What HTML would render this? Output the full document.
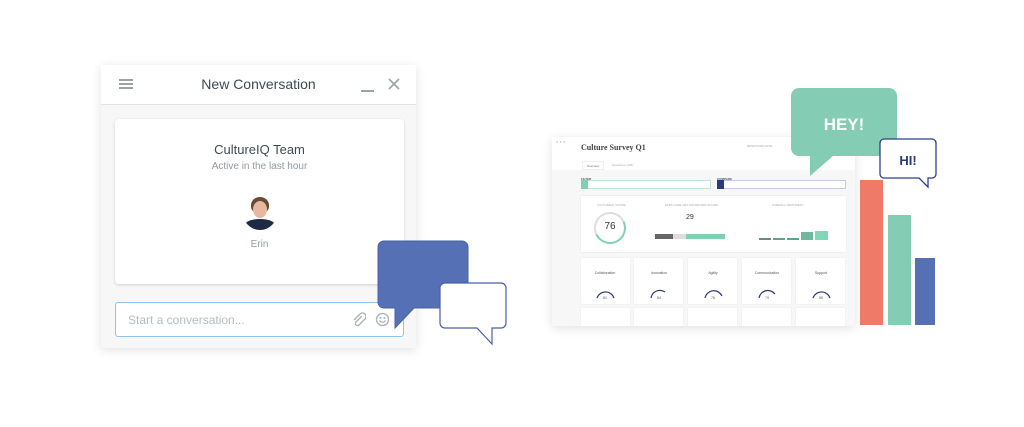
<!DOCTYPE html>
<html><head><meta charset="utf-8"><style>
*{margin:0;padding:0;box-sizing:border-box}
body{width:1024px;height:427px;background:#fff;position:relative;overflow:hidden;font-family:"Liberation Sans",sans-serif}
.a{position:absolute}
.chat{left:101px;top:65px;width:315px;height:283px;background:#f7f7f7;box-shadow:0 2px 10px rgba(0,0,0,.12)}
.hdr{left:0;top:0;width:315px;height:40px;background:#fff;border-bottom:1px solid #e3e3e3}
.card{left:14px;top:54px;width:289px;height:165px;background:#fff;border-radius:4px;box-shadow:0 1px 3px rgba(0,0,0,.15)}
.inp{left:14px;top:237px;width:289px;height:35px;background:#fff;border:1px solid #8cc3f0;border-radius:3px}
.dash{left:552px;top:137px;width:303px;height:189px;background:#f7f7f7;box-shadow:0 2px 10px rgba(0,0,0,.12);overflow:hidden}
.t{font-size:3px;color:#aaa}
.qc{background:#fff;width:49px;height:46px;top:121px;box-shadow:0 0 1px rgba(0,0,0,.1)}
</style></head><body>
<div class="a chat">
 <div class="a hdr">
  <div class="a" style="left:18px;top:14px;width:14px;height:2px;background:#9aa3a9;box-shadow:0 4px 0 #9aa3a9,0 8px 0 #9aa3a9"></div>
  <div class="a" style="left:0;width:315px;top:11px;text-align:center;font-size:14px;color:#3d4a52">New Conversation</div>
  <div class="a" style="left:260px;top:25px;width:13px;height:2px;background:#9aa3a9"></div>
  <svg class="a" style="left:287px;top:13px" width="12" height="12"><path d="M1 1L11 11M11 1L1 11" stroke="#9aa3a9" stroke-width="1.6"/></svg>
 </div>
 <div class="a card">
  <div class="a" style="width:289px;top:23px;text-align:center;font-size:13px;color:#3d4a52">CultureIQ Team</div>
  <div class="a" style="width:289px;top:42px;text-align:center;font-size:10px;color:#8e9ba4">Active in the last hour</div>
  <div class="a" style="left:128px;top:77px;width:34px;height:34px;border-radius:50%;overflow:hidden;background:#fff">
   <div class="a" style="left:8px;top:1px;width:18px;height:16px;border-radius:50% 50% 40% 40%;background:#6b4a35"></div>
   <div class="a" style="left:10px;top:5px;width:14px;height:17px;border-radius:50%;background:#e7b8a0"></div>
   <div class="a" style="left:1px;top:23px;width:32px;height:14px;border-radius:50% 50% 0 0;background:#1f2a44"></div>
  </div>
  <div class="a" style="width:289px;top:120px;text-align:center;font-size:10px;color:#8e9ba4">Erin</div>
 </div>
 <div class="a inp">
  <div class="a" style="left:12px;top:10px;font-size:12px;color:#b4bcc2">Start a conversation...</div>
  <svg class="a" style="left:236px;top:9px" width="14" height="16"><path d="M10 4L4 10a2 2 0 0 0 3 3l6-6a3.5 3.5 0 0 0-5-5L2 8" fill="none" stroke="#a8b0b6" stroke-width="1.3"/></svg>
  <svg class="a" style="left:259px;top:9px" width="15" height="15"><circle cx="7.5" cy="7.5" r="6" fill="none" stroke="#a8b0b6" stroke-width="1.3"/><circle cx="5.5" cy="6" r="1" fill="#a8b0b6"/><circle cx="9.5" cy="6" r="1" fill="#a8b0b6"/><path d="M4.5 8.5q3 3.5 6 0" fill="none" stroke="#a8b0b6" stroke-width="1.2"/></svg>
 </div>
</div>
<svg class="a" style="left:370px;top:235px" width="145" height="115">
 <path d="M14 6H92a6 6 0 0 1 6 6V67a6 6 0 0 1-6 6H44L25 93V73H14a6 6 0 0 1-6-6V12a6 6 0 0 1 6-6z" fill="#5670b6" stroke="#4a61a6" stroke-width="1"/>
 <path d="M75 48H131a5 5 0 0 1 5 5V88a5 5 0 0 1-5 5H122V109L107 93H75a5 5 0 0 1-5-5V53a5 5 0 0 1 5-5z" fill="#fff" stroke="#4a5ea8" stroke-width="1.2"/>
</svg>

<div class="a dash">
 <div class="a" style="left:0;top:0;width:303px;height:33px;background:#fff"></div>
 <div class="a" style="left:4px;top:2px;font-size:4px;color:#ccc">● ● ●</div>
 <div class="a" style="left:29px;top:6px;font-size:8px;color:#444;font-family:'Liberation Serif',serif;font-weight:bold">Culture Survey Q1</div>
 <div class="a t" style="left:195px;top:7px">RESPONSE RATE</div>
 <div class="a" style="left:30px;top:24px;width:22px;height:9px;background:#fff;border:1px solid #eee;font-size:3px;color:#5670b6;text-align:center;line-height:8px">Overview</div>
 <div class="a t" style="left:60px;top:26px">Questions (125)</div>
 <div class="a" style="left:29px;top:40px;font-size:3px;color:#555;font-weight:bold">FILTER</div>
 <div class="a" style="left:165px;top:40px;font-size:3px;color:#555;font-weight:bold">COMPARE</div>
 <div class="a" style="left:29px;top:43px;width:130px;height:9px;background:#fff;border:1px solid #bfe6d4"></div>
 <div class="a" style="left:29px;top:43px;width:7px;height:9px;background:#7fd0b2"></div>
 <div class="a" style="left:165px;top:43px;width:129px;height:9px;background:#fff;border:1px solid #c4cae6"></div>
 <div class="a" style="left:165px;top:43px;width:7px;height:9px;background:#283a80"></div>
 <div class="a" style="left:29px;top:59px;width:265px;height:56px;background:#fff;box-shadow:0 0 1px rgba(0,0,0,.15)"></div>
 <div class="a t" style="left:45px;top:66px">CULTUREIQ SCORE</div>
 <div class="a" style="left:42px;top:75px;width:32px;height:32px;border-radius:50%;border:2px solid #7fd0b2;border-left-color:#ddd;border-top-color:#ddd;transform:rotate(20deg)"></div>
 <div class="a" style="left:42px;top:84px;width:32px;text-align:center;font-size:10px;color:#333">76</div>
 <div class="a t" style="left:113px;top:66px">EMPLOYEE NET PROMOTER SCORE</div>
 <div class="a" style="left:134px;top:77px;font-size:7px;color:#333">29</div>
 <div class="a" style="left:103px;top:97px;width:18px;height:5px;background:#666"></div>
 <div class="a" style="left:121px;top:97px;width:13px;height:5px;background:#ddd"></div>
 <div class="a" style="left:134px;top:97px;width:39px;height:5px;background:#7fd0b2"></div>
 <div class="a t" style="left:220px;top:66px">OVERALL SENTIMENT</div>
 <div class="a" style="left:207px;top:101px;width:12px;height:2px;background:#6a8a80"></div>
 <div class="a" style="left:221px;top:101px;width:12px;height:2px;background:#5fa48c"></div>
 <div class="a" style="left:235px;top:101px;width:12px;height:2px;background:#5fa48c"></div>
 <div class="a" style="left:249px;top:95px;width:12px;height:8px;background:#6fb89d"></div>
 <div class="a" style="left:263px;top:94px;width:13px;height:9px;background:#7fd9b8"></div>
 <div class="a qc" style="left:29px"></div><div class="a qc" style="left:82px"></div><div class="a qc" style="left:136px"></div><div class="a qc" style="left:190px"></div><div class="a qc" style="left:244px"></div>
 <div class="a qc" style="left:29px;top:171px"></div><div class="a qc" style="left:82px;top:171px"></div><div class="a qc" style="left:136px;top:171px"></div><div class="a qc" style="left:190px;top:171px"></div><div class="a qc" style="left:244px;top:171px"></div>
 <svg class="a" style="left:29px;top:121px" width="265" height="46" font-size="3.5" fill="#555" text-anchor="middle" font-family="Liberation Sans">
  <text x="24" y="16">Collaboration</text><text x="78" y="16">Innovation</text><text x="132" y="16">Agility</text><text x="186" y="16">Communication</text><text x="240" y="16">Support</text>
  <g fill="none" stroke="#2b3a80" stroke-width="1.2">
   <path d="M16 40a9 9 0 0 1 17 0"/><path d="M70 40a9 9 0 0 1 14-6"/><path d="M124 40a9 9 0 0 1 17 -2"/><path d="M178 40a9 9 0 0 1 16-4"/><path d="M232 40a9 9 0 0 1 17 0"/>
  </g>
  <text x="24" y="41">81</text><text x="78" y="41">54</text><text x="132" y="41">76</text><text x="186" y="41">79</text><text x="240" y="41">85</text>
 </svg>
</div>

<svg class="a" style="left:785px;top:82px" width="160" height="250">
 <path d="M14 6H104a8 8 0 0 1 8 8V66a8 8 0 0 1-8 8H48L25 94V74H14a8 8 0 0 1-8-8V14a8 8 0 0 1 8-8z" fill="#84cdb4"/>
 <text x="59" y="48" font-size="17" font-weight="bold" fill="#fff" text-anchor="middle" font-family="Liberation Sans">HEY!</text>
 <rect x="75" y="98" width="23" height="145" fill="#f07a68"/>
 <rect x="103" y="133" width="23" height="110" fill="#84cdb4"/>
 <rect x="130" y="176" width="20" height="67" fill="#5670b6"/>
 <path d="M99 57H147a4 4 0 0 1 4 4V92a4 4 0 0 1-4 4H143V105L134 96H99a4 4 0 0 1-4-4V61a4 4 0 0 1 4-4z" fill="#fff" stroke="#2f3f8a" stroke-width="1.3"/>
 <text x="123" y="83" font-size="13" font-weight="bold" fill="#2b3a80" text-anchor="middle" font-family="Liberation Sans">HI!</text>
</svg>
</body></html>
